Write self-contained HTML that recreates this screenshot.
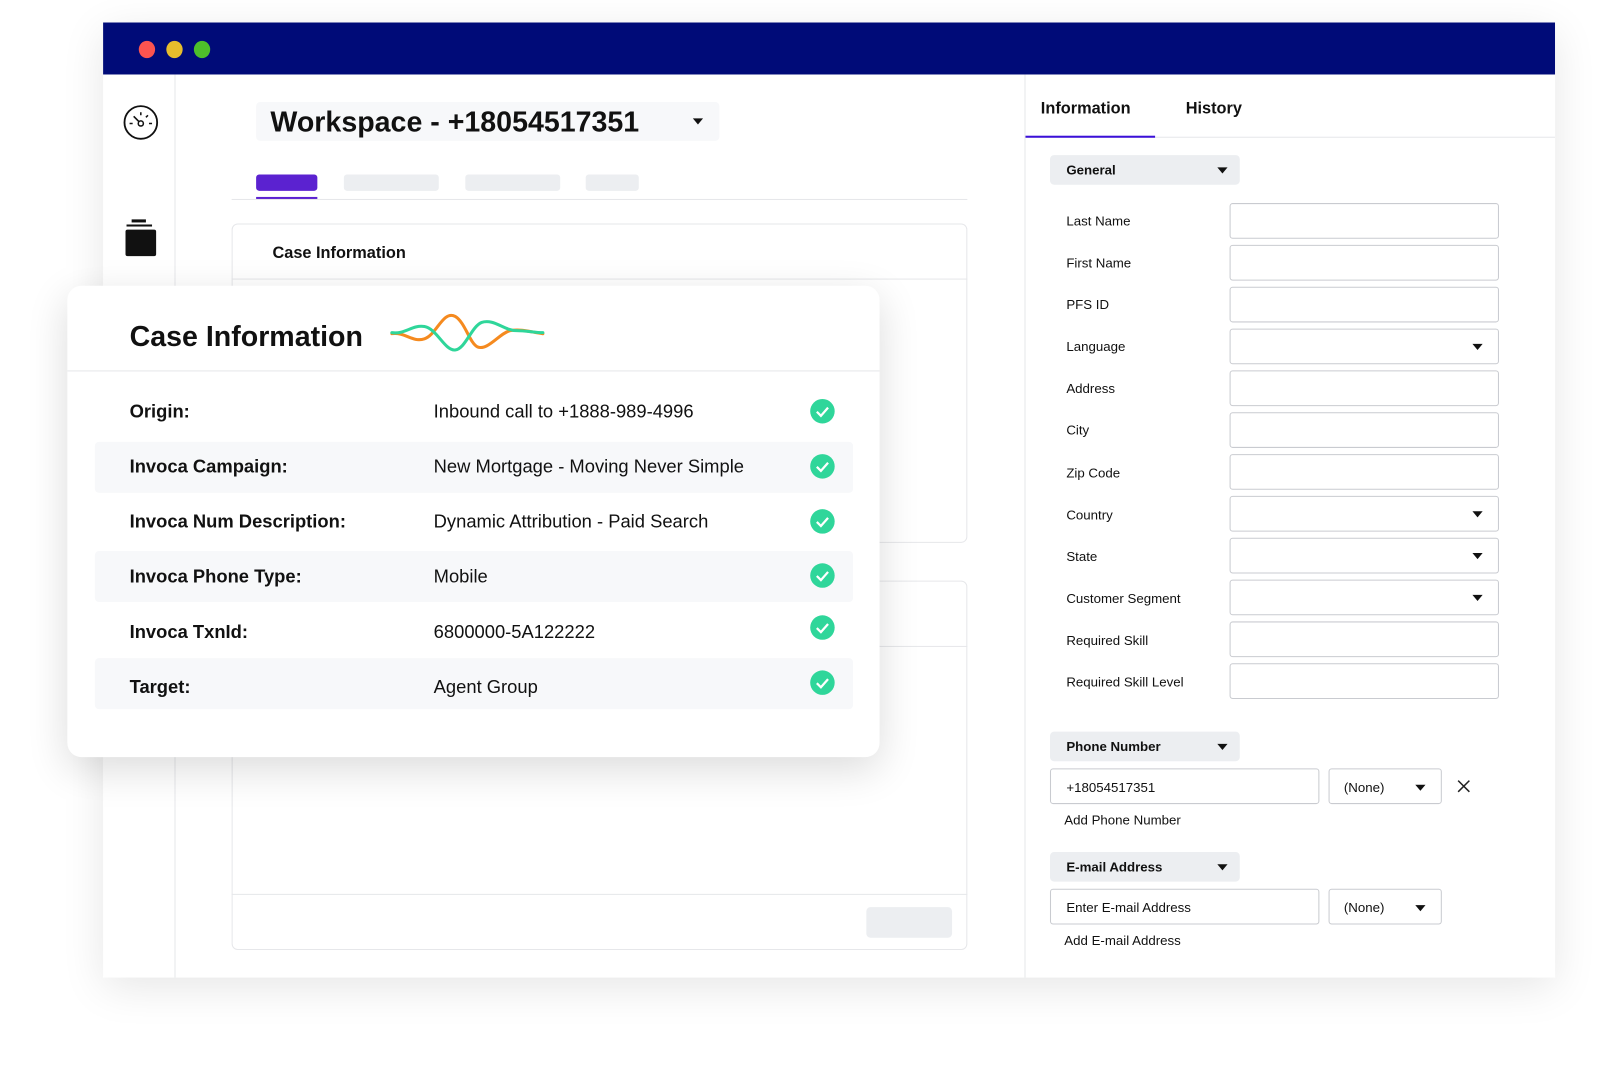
<!DOCTYPE html>
<html><head><meta charset="utf-8"><style>
*{box-sizing:border-box;margin:0;padding:0}
body{width:1600px;height:1045px;background:#fff;font-family:"Liberation Sans",Arial,sans-serif;color:#111;position:relative;overflow:hidden}
#w{position:absolute;left:0;top:0;width:1600px;height:1045px;transform:scale(1.0204);transform-origin:0 0}
.a{position:absolute}
.win{left:101px;top:22px;width:1423px;height:936px;background:#fff;box-shadow:0 10px 40px rgba(0,0,0,.10);overflow:hidden}
.bar{left:0;top:0;width:1423px;height:51px;background:#000b78}
.dot{width:16px;height:17px;border-radius:50%;top:18px}
.lbl{font-size:13px;left:1045px;color:#111}
.inp{left:1205px;width:264px;height:35px;border:1px solid #c9cbd0;border-radius:3px;background:#fff}
.tri{width:0;height:0;border-left:5px solid transparent;border-right:5px solid transparent;border-top:6px solid #111}
.dd{background:#eceef1;border-radius:4px;font-weight:bold;font-size:13px;padding:0 0 0 16px;line-height:29px;height:29px;width:186px;left:1029px}
.dd .tri{position:absolute;right:12px;top:12px}
.row{left:27px;width:743px;height:50px}
.row.s{background:#f7f8fa;border-radius:4px}
.k{left:34px;font-weight:bold;font-size:18px}
.v{left:332px;font-size:18px}
.ck{left:701px;width:24px;height:24px;border-radius:50%;background:#2fd69a}
</style></head><body><div id="w">
<div class="a win">
  <div class="a bar">
    <div class="a dot" style="left:35px;background:#fb5450"></div>
    <div class="a dot" style="left:62px;background:#e6bd2c"></div>
    <div class="a dot" style="left:89px;background:#4dbf2b"></div>
  </div>
  <div class="a" style="left:70px;top:51px;width:1px;height:885px;background:#e6e7ea"></div>
  <div class="a" style="left:903px;top:51px;width:1px;height:885px;background:#e6e7ea"></div>
  <svg class="a" style="left:19px;top:80px" width="36" height="36" viewBox="0 0 36 36"><circle cx="18" cy="18" r="16" fill="none" stroke="#111" stroke-width="1.8"/><circle cx="18" cy="19" r="2.5" fill="none" stroke="#111" stroke-width="1.5"/><path d="M16 17 L11 12" stroke="#111" stroke-width="1.6"/><path d="M18 8v3M25 11l-2 2M7 19h3M26 19h3" stroke="#111" stroke-width="1.5"/></svg>
  <div class="a" style="left:28px;top:193px;width:14px;height:3px;background:#111"></div>
  <div class="a" style="left:23px;top:198px;width:25px;height:2px;background:#111"></div>
  <div class="a" style="left:22px;top:203px;width:30px;height:26px;background:#111;border-radius:2px"></div>

  <div class="a" style="left:150px;top:78px;width:454px;height:38px;background:#f7f8fa;border-radius:4px"></div>
  <div class="a" style="left:164px;top:82px;font-size:28px;font-weight:bold">Workspace - +18054517351</div>
  <div class="a tri" style="left:578px;top:94px"></div>
  <div class="a" style="left:150px;top:149px;width:60px;height:16px;background:#5b22d0;border-radius:3px"></div>
  <div class="a" style="left:150px;top:171px;width:60px;height:2px;background:#5b22d0"></div>
  <div class="a" style="left:236px;top:149px;width:93px;height:16px;background:#eceef1;border-radius:3px"></div>
  <div class="a" style="left:355px;top:149px;width:93px;height:16px;background:#eceef1;border-radius:3px"></div>
  <div class="a" style="left:473px;top:149px;width:52px;height:16px;background:#eceef1;border-radius:3px"></div>
  <div class="a" style="left:126px;top:173px;width:721px;height:1px;background:#e6e7ea"></div>
  <div class="a" style="left:126px;top:197px;width:721px;height:313px;border:1px solid #e6e7ea;border-radius:6px"></div>
  <div class="a" style="left:126px;top:251px;width:721px;height:1px;background:#e6e7ea"></div>
  <div class="a" style="left:166px;top:218px;font-size:16px;font-weight:bold">Case Information</div>
  <div class="a" style="left:126px;top:547px;width:721px;height:362px;border:1px solid #e6e7ea;border-radius:6px"></div>
  <div class="a" style="left:126px;top:611px;width:721px;height:1px;background:#e6e7ea"></div>
  <div class="a" style="left:126px;top:854px;width:721px;height:1px;background:#e6e7ea"></div>
  <div class="a" style="left:748px;top:867px;width:84px;height:30px;background:#eceef1;border-radius:4px"></div>

  <div class="a" style="left:919px;top:76px;font-size:16px;font-weight:bold">Information</div>
  <div class="a" style="left:1061px;top:76px;font-size:16px;font-weight:bold">History</div>
  <div class="a" style="left:904px;top:112px;width:519px;height:1px;background:#e6e7ea"></div>
  <div class="a" style="left:904px;top:111px;width:127px;height:2px;background:#3b10d8"></div>
</div>

<div class="a dd" style="top:152px">General<div class="tri"></div></div>
<div class="a lbl" style="top:209px">Last Name</div><div class="a inp" style="top:199px"></div>
<div class="a lbl" style="top:250px">First Name</div><div class="a inp" style="top:240px"></div>
<div class="a lbl" style="top:291px">PFS ID</div><div class="a inp" style="top:281px"></div>
<div class="a lbl" style="top:332px">Language</div><div class="a inp" style="top:322px"><div class="a tri" style="right:15px;top:14px"></div></div>
<div class="a lbl" style="top:373px">Address</div><div class="a inp" style="top:363px"></div>
<div class="a lbl" style="top:414px">City</div><div class="a inp" style="top:404px"></div>
<div class="a lbl" style="top:456px">Zip Code</div><div class="a inp" style="top:445px"></div>
<div class="a lbl" style="top:497px">Country</div><div class="a inp" style="top:486px"><div class="a tri" style="right:15px;top:14px"></div></div>
<div class="a lbl" style="top:538px">State</div><div class="a inp" style="top:527px"><div class="a tri" style="right:15px;top:14px"></div></div>
<div class="a lbl" style="top:579px">Customer Segment</div><div class="a inp" style="top:568px"><div class="a tri" style="right:15px;top:14px"></div></div>
<div class="a lbl" style="top:620px">Required Skill</div><div class="a inp" style="top:609px"></div>
<div class="a lbl" style="top:661px">Required Skill Level</div><div class="a inp" style="top:650px"></div>

<div class="a dd" style="top:717px">Phone Number<div class="tri"></div></div>
<div class="a inp" style="left:1029px;width:264px;top:753px;font-size:13px;padding:10px 0 0 15px">+18054517351</div>
<div class="a inp" style="left:1302px;width:111px;top:753px;font-size:13px;padding:10px 0 0 14px">(None)<div class="a tri" style="right:15px;top:15px"></div></div>
<svg class="a" style="left:1428px;top:764px" width="13" height="13" viewBox="0 0 13 13"><path d="M1 1L12 12M12 1L1 12" stroke="#222" stroke-width="1.5"/></svg>
<div class="a" style="left:1043px;top:796px;font-size:13px">Add Phone Number</div>
<div class="a dd" style="top:835px">E-mail Address<div class="tri"></div></div>
<div class="a inp" style="left:1029px;width:264px;top:871px;font-size:13px;padding:10px 0 0 15px">Enter E-mail Address</div>
<div class="a inp" style="left:1302px;width:111px;top:871px;font-size:13px;padding:10px 0 0 14px">(None)<div class="a tri" style="right:15px;top:15px"></div></div>
<div class="a" style="left:1043px;top:914px;font-size:13px">Add E-mail Address</div>

<div class="a" style="left:66px;top:280px;width:796px;height:462px;background:#fff;border-radius:14px;box-shadow:0 12px 40px rgba(0,0,0,.14)">
  <div class="a" style="left:61px;top:34px;font-size:28px;font-weight:bold">Case Information</div>
  <svg class="a" style="left:316px;top:26px" width="152" height="42" viewBox="0 0 152 42"><path d="M2 21 C15 19 22 30 34 26 C46 22 52 -2 64 4 C74 10 78 30 86 34 C96 38 108 20 118 18 C130 16 140 20 150 21" fill="none" stroke="#f58a1f" stroke-width="3" stroke-linecap="round"/><path d="M2 20 C15 22 22 12 34 14 C46 16 54 38 64 37 C74 36 80 14 90 10 C102 6 112 18 124 18 C134 18 142 20 150 20" fill="none" stroke="#2fd69a" stroke-width="3" stroke-linecap="round"/></svg>
  <div class="a" style="left:0;top:83px;width:796px;height:1px;background:#e6e7ea"></div>
  <div class="a row" style="top:98px"><div class="a k" style="top:15px">Origin:</div><div class="a v" style="top:15px">Inbound call to +1888-989-4996</div><svg class="a ck" style="top:13px" viewBox="0 0 24 24"><path d="M6.5 12.5l4 4 7-8" fill="none" stroke="#fff" stroke-width="2.2"/></svg></div>
  <div class="a row s" style="top:153px"><div class="a k" style="top:14px">Invoca Campaign:</div><div class="a v" style="top:14px">New Mortgage - Moving Never Simple</div><svg class="a ck" style="top:12px" viewBox="0 0 24 24"><path d="M6.5 12.5l4 4 7-8" fill="none" stroke="#fff" stroke-width="2.2"/></svg></div>
  <div class="a row" style="top:206px"><div class="a k" style="top:15px">Invoca Num Description:</div><div class="a v" style="top:15px">Dynamic Attribution - Paid Search</div><svg class="a ck" style="top:13px" viewBox="0 0 24 24"><path d="M6.5 12.5l4 4 7-8" fill="none" stroke="#fff" stroke-width="2.2"/></svg></div>
  <div class="a row s" style="top:260px"><div class="a k" style="top:15px">Invoca Phone Type:</div><div class="a v" style="top:15px">Mobile</div><svg class="a ck" style="top:12px" viewBox="0 0 24 24"><path d="M6.5 12.5l4 4 7-8" fill="none" stroke="#fff" stroke-width="2.2"/></svg></div>
  <div class="a row" style="top:314px"><div class="a k" style="top:15px">Invoca TxnId:</div><div class="a v" style="top:15px">6800000-5A122222</div><svg class="a ck" style="top:9px" viewBox="0 0 24 24"><path d="M6.5 12.5l4 4 7-8" fill="none" stroke="#fff" stroke-width="2.2"/></svg></div>
  <div class="a row s" style="top:365px"><div class="a k" style="top:18px">Target:</div><div class="a v" style="top:18px">Agent Group</div><svg class="a ck" style="top:12px" viewBox="0 0 24 24"><path d="M6.5 12.5l4 4 7-8" fill="none" stroke="#fff" stroke-width="2.2"/></svg></div>
</div>
</div></body></html>
